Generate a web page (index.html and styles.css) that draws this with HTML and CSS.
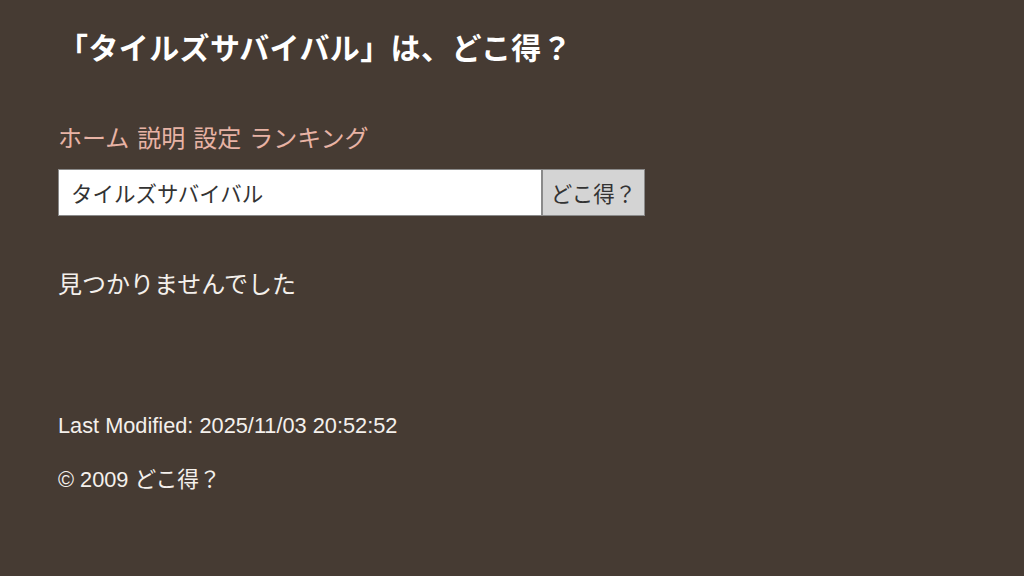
FILE: index.html
```html
<!DOCTYPE html>
<html lang="ja">
<head>
    <meta charset="UTF-8">
    <meta name="viewport" content="width=device-width, initial-scale=1.0">
    <title>「タイルズサバイバル」は、どこ得？</title>
    <link rel="stylesheet" href="styles.css">
</head>
<body>
    <div class="page">
        <h1 class="title">「タイルズサバイバル」は、どこ得？</h1>
        <nav class="menu">
            <a href="#">ホーム</a>
            <a href="#">説明</a>
            <a href="#">設定</a>
            <a href="#">ランキング</a>
        </nav>
        <form class="search">
            <input type="text" class="search-input" value="タイルズサバイバル">
            <button type="submit" class="search-button">どこ得？</button>
        </form>
        <p class="result">見つかりませんでした</p>
        <footer class="footer">
            <p>Last Modified: 2025/11/03 20:52:52</p>
            <p>© 2009 どこ得？</p>
        </footer>
    </div>
</body>
</html>
```

FILE: styles.css
```css
body {
    margin: 0;
    padding: 0;
    background-color: #463b33;
    color: #f4f0ec;
    font-family: "Liberation Sans", Arial, "Noto Sans CJK JP", sans-serif;
}

.page {
    padding: 26px 58px 40px;
}

.title {
    font-family: "Noto Sans CJK JP", sans-serif;
    font-size: 30px;
    font-weight: bold;
    line-height: 40px;
    letter-spacing: 0.4px;
    margin: 0;
    color: #ffffff;
}

.menu {
    margin-top: 53px;
    display: flex;
    gap: 8px;
    font-family: "Noto Sans CJK JP", sans-serif;
    font-size: 24px;
    line-height: 36px;
}

.menu a {
    color: #e8b3a5;
    text-decoration: none;
}

.search {
    display: flex;
    margin-top: 14px;
}

.search-input {
    width: 484px;
    height: 47px;
    box-sizing: border-box;
    padding: 0 12px;
    border: 1px solid #8a8a8a;
    font-family: "Noto Sans CJK JP", sans-serif;
    font-size: 21.5px;
    color: #333;
    background: #fff;
}

.search-button {
    width: 103px;
    height: 47px;
    box-sizing: border-box;
    border: 1px solid #8a8a8a;
    background-color: #d4d4d4;
    font-family: "Noto Sans CJK JP", sans-serif;
    font-size: 21.5px;
    color: #333;
    padding: 0 4px;
}

.result {
    font-family: "Noto Sans CJK JP", sans-serif;
    font-size: 24px;
    line-height: 36px;
    margin: 49px 0 0;
}

.footer {
    margin-top: 110px;
    font-size: 21.75px;
}

.footer p {
    margin: 0 0 24px;
    line-height: 30px;
}
```
